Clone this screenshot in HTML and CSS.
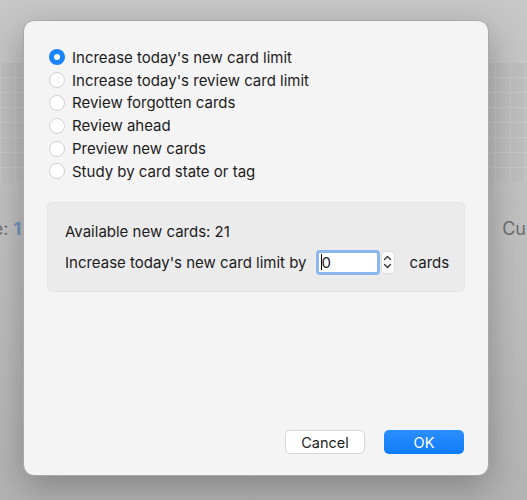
FILE: index.html
```html
<!DOCTYPE html>
<html lang="en">
<head>
  <meta charset="UTF-8">
  <title>Custom Study</title>
  <link rel="stylesheet" href="styles.css">
</head>
<body>

  <!-- Page behind the sheet -->
  <div class="backdrop">
    <div class="heatmap"></div>
    <div class="stats">
      <span class="stat">Due: <b>1</b></span>
      <span class="stat">Cu</span>
    </div>
  </div>

  <!-- Custom study sheet -->
  <div class="dialog">
    <div class="options">
      <label class="option"><span class="radio checked"></span>Increase today's new card limit</label>
      <label class="option"><span class="radio"></span>Increase today's review card limit</label>
      <label class="option"><span class="radio"></span>Review forgotten cards</label>
      <label class="option"><span class="radio"></span>Review ahead</label>
      <label class="option"><span class="radio"></span>Preview new cards</label>
      <label class="option"><span class="radio"></span>Study by card state or tag</label>
    </div>

    <div class="panel">
      <p class="info">Available new cards: 21</p>
      <div class="limit-row">
        <span>Increase today's new card limit by</span>
        <span class="spin">
          <span class="spin-input"><span class="caret"></span>0</span>
          <span class="stepper">
            <svg width="9" height="20" viewBox="0 0 9 20"><path d="M1.5 7.5 L4.5 4.5 L7.5 7.5" fill="none" stroke="#333" stroke-width="1.3" stroke-linecap="round" stroke-linejoin="round"/><path d="M1.5 12.5 L4.5 15.5 L7.5 12.5" fill="none" stroke="#333" stroke-width="1.3" stroke-linecap="round" stroke-linejoin="round"/></svg>
          </span>
        </span>
        <span>cards</span>
      </div>
    </div>

    <div class="buttons">
      <button class="btn">Cancel</button>
      <button class="btn primary">OK</button>
    </div>
  </div>

</body>
</html>
```

FILE: styles.css
```css
* {
  box-sizing: border-box;
}

body {
  margin: 0;
  width: 527px;
  height: 500px;
  overflow: hidden;
  position: relative;
  font-family: Inter, 'Liberation Sans', Arial, sans-serif;
  background: linear-gradient(to bottom, #c7c7c7 0%, #bdbdbd 60%, #b3b3b3 100%);
}

/* underlying page, dimmed */
.backdrop {
  padding-top: 62px;
}

.heatmap {
  height: 120px;
  background-image:
    linear-gradient(to right, rgba(255,255,255,0.12) 1px, transparent 1px),
    linear-gradient(to bottom, rgba(255,255,255,0.12) 1px, transparent 1px);
  background-size: 15px 15px;
  background-color: #bebebe;
}

.stats {
  display: flex;
  justify-content: space-between;
  margin-top: 36px;
  margin-left: -31px;
  margin-right: 1px;
  font-size: 18px;
  color: #6f6f6f;
}

.stat b {
  font-weight: bold;
  color: #6b95bd;
}

/* sheet */
.dialog {
  position: absolute;
  left: 23px;
  top: 20px;
  width: 466px;
  height: 456px;
  background: #f4f4f4;
  border: 1px solid #a9a9a9;
  border-radius: 11px;
  box-shadow: 0 12px 36px rgba(0, 0, 0, 0.28);
  padding: 25px 24px 21px 25px;
  display: flex;
  flex-direction: column;
  color: #1c1c1c;
  font-size: 15px;
}

.options {
  display: flex;
  flex-direction: column;
}

.option {
  display: flex;
  align-items: center;
  height: 22.8px;
  gap: 7px;
  white-space: nowrap;
}

.radio {
  width: 16px;
  height: 16px;
  border-radius: 50%;
  border: 1px solid #d2d2d2;
  background: #fff;
  flex-shrink: 0;
}

.radio.checked {
  border: none;
  background: #1a82fb;
  display: flex;
  align-items: center;
  justify-content: center;
}

.radio.checked::after {
  content: "";
  width: 6px;
  height: 6px;
  border-radius: 50%;
  background: #fff;
}

.panel {
  margin: 19px -1px 0 -2px;
  height: 90px;
  background: #ebebeb;
  border: 1px solid #e4e4e4;
  border-radius: 5px;
  padding: 19px 17px 0;
}

.info {
  margin: 0 0 9px;
}

.limit-row {
  display: flex;
  align-items: center;
  white-space: nowrap;
}

.spin {
  display: flex;
  align-items: center;
  gap: 1px;
  margin: 0 15px 0 9px;
}

.spin-input {
  width: 64px;
  height: 25px;
  background: #fff;
  border: 3px solid #8db5ee;
  border-radius: 4px;
  padding-left: 2px;
  display: flex;
  align-items: center;
  font-size: 15px;
}

.caret {
  width: 1px;
  height: 16px;
  background: #000;
}

.stepper {
  width: 14px;
  height: 23px;
  background: #fafafa;
  border: 1px solid #dedede;
  border-radius: 4px;
  display: flex;
  align-items: center;
  justify-content: center;
}

.buttons {
  margin-top: auto;
  display: flex;
  justify-content: flex-end;
  gap: 19px;
}

.btn {
  width: 80px;
  height: 24px;
  border-radius: 5px;
  border: 1px solid #d6d6d6;
  background: #fff;
  font-family: inherit;
  font-size: 14.5px;
  color: #1c1c1c;
  padding: 0;
}

.primary {
  border: none;
  background: linear-gradient(to bottom, #2b8ffd, #0f7cf8);
  color: #fff;
}
```
